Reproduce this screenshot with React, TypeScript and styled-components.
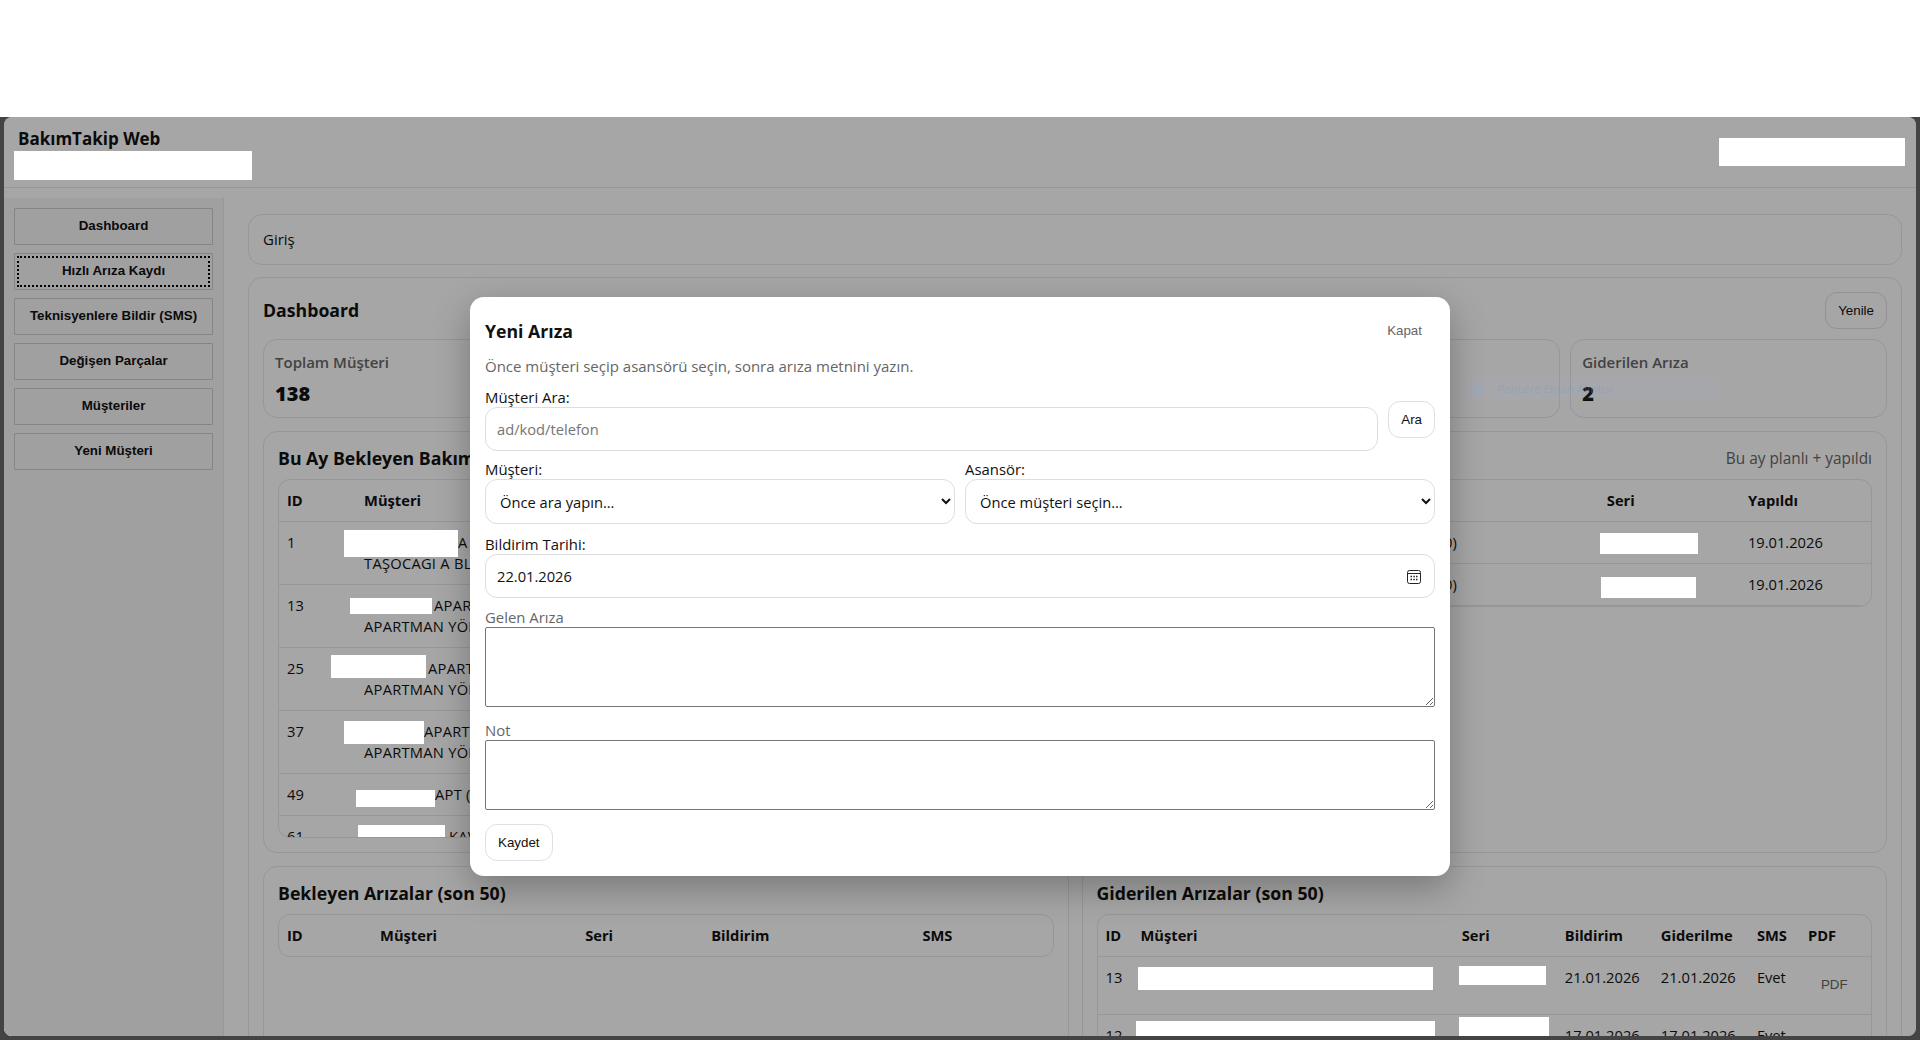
import React from "react";
import styled, { createGlobalStyle } from "styled-components";

const Global = createGlobalStyle`
  html, body { margin: 0; padding: 0; background: #fff; height: 1040px; overflow: hidden; }
  body { font-family: "Open Sans", "Liberation Sans", sans-serif; font-size: 14.7px; line-height: 21px; color: #111; }
  * { box-sizing: border-box; }
`;

const TopBlank = styled.div`height: 117px; background: #fff;`;
const Desktop = styled.div`height: 923px; background: #444; padding: 0 4px 4px 4px;`;
const AppWindow = styled.div`
  position: relative; height: 919px; background: #fff; border-radius: 8px; overflow: hidden;
`;
const Header = styled.header`
  height: 71px; border-bottom: 1px solid #e8e8e8; padding: 11px 14px 10px;
  display: flex; justify-content: space-between; align-items: flex-start; position: relative;
`;
const Brand = styled.div`font-size: 17px; font-weight: 700; line-height: 22px;`;
const Body = styled.div`display: flex; padding-top: 10px; height: 848px;`;
const Sidebar = styled.nav`
  width: 220px; flex: none; background: #f6f6f6; border-right: 1px solid #e8e8e8; padding: 10px;
  display: flex; flex-direction: column; gap: 8px;
`;
const NavButton = styled.button<{ $focus?: boolean }>`
  height: 37px; font: 700 13.33px "Liberation Sans", Arial, sans-serif; color: #111; background: #f6f6f6;
  border: 1px solid #ccc; border-radius: 1px; padding: 0 0 2px;
  ${(p) => (p.$focus ? "outline: 2px dotted #000; outline-offset: -5px;" : "")}
`;
const Main = styled.main`flex: 1; min-width: 0; padding: 16px 14px 0 24px; display: flex; flex-direction: column; gap: 12px;`;
const Card = styled.section`border: 1px solid #e8e8e8; border-radius: 14px; padding: 14px; background: #fff; font-size: 15px;`;
const DashboardCard = styled(Card)`flex: 1; font-size: 14.7px;`;
const TitleRow = styled.div`display: flex; justify-content: space-between; align-items: center; height: 36px; margin-bottom: 11px;`;
const H1 = styled.h2`margin: 0; font-size: 17.7px; font-weight: 700; line-height: 24px;`;
const GrayNote = styled.span`color: #666; font-size: 15.4px;`;
const Btn = styled.button`
  font: 400 13.33px "Liberation Sans", Arial, sans-serif; color: #111; background: #fff;
  border: 1px solid #e0e0e0; border-radius: 12px; padding: 0 12px; height: 37px; flex: none;
`;
const GhostBtn = styled(Btn)`background: transparent; border-color: transparent; color: #666; display: block;`;
const PdfBtn = styled(GhostBtn)`height: 35px; margin-bottom: 2px;`;
const Stats = styled.div`display: grid; grid-template-columns: repeat(5, 1fr); gap: 10px; margin-bottom: 13px;`;
const Stat = styled.div`border: 1px solid #e8e8e8; border-radius: 14px; padding: 12px 11px; height: 79px;`;
const StatLabel = styled.div`color: #666; font-weight: 600; font-size: 15px;`;
const StatValue = styled.div`font-weight: 800; font-size: 20px; line-height: 24px; margin-top: 9px;`;
const Columns = styled.div`display: grid; grid-template-columns: 1fr 1fr; gap: 13px; margin-bottom: 13px;`;
const Panel = styled.div`border: 1px solid #e8e8e8; border-radius: 14px; padding: 14px; min-width: 0;`;
const PanelHead = styled.div`display: flex; justify-content: space-between; align-items: center; height: 24px; margin-bottom: 9px;`;
const TableWrap = styled.div<{ $h?: number }>`
  border: 1px solid #e8e8e8; border-radius: 12px; overflow: hidden;
  ${(p) => (p.$h ? `height: ${p.$h}px;` : "")}
`;
const Table = styled.table`width: 100%; table-layout: fixed; border-collapse: separate; border-spacing: 0;`;
const Col = styled.col<{ $w: number }>`width: ${(p) => p.$w}px;`;
const Th = styled.th`
  text-align: left; font-weight: 700; padding: 10px 9px; height: 42px; border-bottom: 1px solid #e8e8e8; white-space: nowrap;
  &:first-child { padding-left: 8px; }
`;
const HeadOnly = styled(Th)`border-bottom: 0; height: 41px;`;
const Td = styled.td<{ $rightPad?: number }>`
  position: relative; padding: 10px 9px; vertical-align: top; border-bottom: 1px solid #e8e8e8; white-space: nowrap;
  &:first-child { padding-left: 8px; }
  ${(p) => (p.$rightPad ? `text-align: right; padding-right: ${p.$rightPad}px;` : "")}
`;
const NameCell = styled(Td)`letter-spacing: 0.25px;`;
const Redact = styled.i<{ $l: number; $t: number; $w: number; $h: number }>`
  position: absolute; z-index: 20; background: #fff; display: block;
  left: ${(p) => p.$l}px; top: ${(p) => p.$t}px; width: ${(p) => p.$w}px; height: ${(p) => p.$h}px;
`;
const NameGap = styled.span<{ $w: number }>`display: inline-block; width: ${(p) => p.$w}px;`;

const Overlay = styled.div`
  position: absolute; inset: 0; z-index: 10; background: rgba(0, 0, 0, 0.35);
  display: flex; justify-content: center; align-items: flex-start; padding-top: 180px;
`;
const Modal = styled.div`
  width: 980px; height: 579px; background: #fff; border-radius: 14px; padding: 15px;
  box-shadow: 0 12px 36px rgba(0, 0, 0, 0.28); display: flex; flex-direction: column;
`;
const ModalHead = styled.div`display: flex; justify-content: space-between; align-items: center; height: 37px;`;
const ModalTitle = styled.h3`margin: 0; font-size: 17.7px; font-weight: 700; line-height: 24px;`;
const Hint = styled.div`color: #666; margin-top: 7px; height: 21px; font-size: 15px;`;
const SearchRow = styled.div`display: flex; align-items: center; gap: 10px; margin-top: 10px;`;
const Field = styled.div`flex: 1; min-width: 0; position: relative;`;
const Label = styled.label<{ $muted?: boolean }>`display: block; height: 20px; line-height: 20px; font-size: 14.9px; color: ${(p) => (p.$muted ? "#666" : "#111")};`;
const TextInput = styled.input<{ $h: number }>`
  display: block; width: 100%; height: ${(p) => p.$h}px; border: 1px solid #ddd; border-radius: 12px; padding: 0 11px;
  font: 14.7px "Open Sans", sans-serif; color: #111; background: #fff; outline: 0;
  &::placeholder { color: #757575; }
`;
const Pair = styled.div`display: grid; grid-template-columns: 1fr 1fr; gap: 10px; margin-top: 8px;`;
const Select = styled.select`
  display: block; width: 100%; height: 45px; border: 1px solid #ddd; border-radius: 12px; padding: 0 10px;
  font: 14.7px "Open Sans", sans-serif; color: #111; background: #fff;
`;
const DateField = styled(Field)`flex: none; margin-top: 10px;`;
const CalIcon = styled.svg`position: absolute; right: 14px; top: 36px; width: 14px; height: 14px;`;
const AreaField = styled.div<{ $gap: number }>`margin-top: ${(p) => p.$gap}px;`;
const Area = styled.textarea<{ $h: number }>`
  display: block; width: 100%; height: ${(p) => p.$h}px; border: 1px solid #767676; border-radius: 2px; padding: 8px; background: #fff; font: 14.7px "Open Sans", sans-serif;
`;
const SaveRow = styled.div`margin-top: 14px;`;
const Watermark = styled.div`
  position: absolute; z-index: 20; left: 1461px; top: 260px; width: 255px; height: 23px;
  background: rgba(150, 190, 235, 0.06); display: flex; align-items: center; gap: 15px; padding-left: 9px;
  font: 11.5px "Open Sans", sans-serif; color: rgba(125, 155, 195, 0.4);
`;
const WmDot = styled.span`width: 8px; height: 8px; border-radius: 2px; background: rgba(140, 170, 210, 0.4);`;

const statData = [
  ["Toplam Müşteri", "138"], ["Toplam Asansör", "214"], ["Bu Ay Bakım", "72"], ["Bekleyen Arıza", "0"], ["Giderilen Arıza", "2"],
];
const leftRows = [
  { id: "1", g: 94, t: "A BLOK APARTMANI", b: "TAŞOCAĞI A BLOK YÖNETİMİ", r: [-11, 8, 114, 27] },
  { id: "13", g: 70, t: "APARTMANI", b: "APARTMAN YÖNETİMİ", r: [-5, 13, 82, 16] },
  { id: "25", g: 64, t: "APARTMANI", b: "APARTMAN YÖNETİMİ", r: [-24, 7, 95, 23] },
  { id: "37", g: 60, t: "APARTMANI", b: "APARTMAN YÖNETİMİ", r: [-11, 10, 80, 23] },
  { id: "49", g: 71, t: "APT (A)", r: [1, 16, 79, 17] },
  { id: "61", g: 85, t: "KAVAK APT", r: [3, 9, 87, 20] },
];

export default function App() {
  return (
    <>
      <Global />
      <TopBlank />
      <Desktop>
        <AppWindow>
          <Header>
            <Brand>BakımTakip Web</Brand>
            <Redact $l={10} $t={34} $w={238} $h={29} />
            <Redact $l={1715} $t={21} $w={186} $h={28} />
          </Header>
          <Body>
            <Sidebar>
              <NavButton>Dashboard</NavButton>
              <NavButton $focus>Hızlı Arıza Kaydı</NavButton>
              <NavButton>Teknisyenlere Bildir (SMS)</NavButton>
              <NavButton>Değişen Parçalar</NavButton>
              <NavButton>Müşteriler</NavButton>
              <NavButton>Yeni Müşteri</NavButton>
            </Sidebar>
            <Main>
              <Card>Giriş</Card>
              <DashboardCard>
                <TitleRow>
                  <H1>Dashboard</H1>
                  <Btn>Yenile</Btn>
                </TitleRow>
                <Stats>
                  {statData.map(([l, v]) => (
                    <Stat key={l}>
                      <StatLabel>{l}</StatLabel>
                      <StatValue>{v}</StatValue>
                    </Stat>
                  ))}
                </Stats>
                <Columns>
                  <Panel>
                    <PanelHead><H1>Bu Ay Bekleyen Bakımlar</H1></PanelHead>
                    <TableWrap $h={359}>
                      <Table>
                        <colgroup><Col $w={76} /><Col $w={420} /><Col $w={140} /><Col $w={137} /></colgroup>
                        <thead><tr><Th>ID</Th><Th>Müşteri</Th><Th>Seri</Th><Th>Plan</Th></tr></thead>
                        <tbody>
                          {leftRows.map((r) => (
                            <tr key={r.id}>
                              <Td>{r.id}</Td>
                              <NameCell>
                                <Redact $l={r.r[0]} $t={r.r[1]} $w={r.r[2]} $h={r.r[3]} />
                                <NameGap $w={r.g} />{r.t}
                                {r.b && <><br />{r.b}</>}
                              </NameCell>
                              <Td>—</Td>
                              <Td>Ocak</Td>
                            </tr>
                          ))}
                        </tbody>
                      </Table>
                    </TableWrap>
                  </Panel>
                  <Panel>
                    <PanelHead><H1>Bu Ay Yapılan Bakımlar</H1><GrayNote>Bu ay planlı + yapıldı</GrayNote></PanelHead>
                    <TableWrap>
                      <Table>
                        <colgroup><Col $w={40} /><Col $w={460} /><Col $w={141} /><Col $w={132} /></colgroup>
                        <thead><tr><Th>ID</Th><Th>Müşteri</Th><Th>Seri</Th><Th>Yapıldı</Th></tr></thead>
                        <tbody>
                          <tr>
                            <Td>2</Td><Td $rightPad={141}>MERKEZ APARTMANI (0)</Td>
                            <Td><Redact $l={2} $t={11} $w={98} $h={21} /></Td><Td>19.01.2026</Td>
                          </tr>
                          <tr>
                            <Td>3</Td><Td $rightPad={141}>ÇINAR APARTMANI (0)</Td>
                            <Td><Redact $l={3} $t={13} $w={95} $h={21} /></Td><Td>19.01.2026</Td>
                          </tr>
                        </tbody>
                      </Table>
                    </TableWrap>
                  </Panel>
                </Columns>
                <Columns>
                  <Panel>
                    <PanelHead><H1>Bekleyen Arızalar (son 50)</H1></PanelHead>
                    <TableWrap>
                      <Table>
                        <colgroup><Col $w={92} /><Col $w={205} /><Col $w={126} /><Col $w={211} /><Col $w={139} /></colgroup>
                        <thead><tr><HeadOnly>ID</HeadOnly><HeadOnly>Müşteri</HeadOnly><HeadOnly>Seri</HeadOnly><HeadOnly>Bildirim</HeadOnly><HeadOnly>SMS</HeadOnly></tr></thead>
                      </Table>
                    </TableWrap>
                  </Panel>
                  <Panel>
                    <PanelHead><H1>Giderilen Arızalar (son 50)</H1></PanelHead>
                    <TableWrap>
                      <Table>
                        <colgroup><Col $w={34} /><Col $w={321} /><Col $w={103} /><Col $w={96} /><Col $w={96} /><Col $w={51} /><Col $w={72} /></colgroup>
                        <thead><tr><Th>ID</Th><Th>Müşteri</Th><Th>Seri</Th><Th>Bildirim</Th><Th>Giderilme</Th><Th>SMS</Th><Th>PDF</Th></tr></thead>
                        <tbody>
                          <tr>
                            <Td>13</Td>
                            <Td><Redact $l={6} $t={10} $w={295} $h={23} /></Td>
                            <Td><Redact $l={6} $t={9} $w={87} $h={19} /></Td>
                            <Td>21.01.2026</Td><Td>21.01.2026</Td><Td>Evet</Td>
                            <Td><PdfBtn>PDF</PdfBtn></Td>
                          </tr>
                          <tr>
                            <Td>12</Td>
                            <Td><Redact $l={4} $t={6} $w={299} $h={40} /></Td>
                            <Td><Redact $l={6} $t={2} $w={90} $h={40} /></Td>
                            <Td>17.01.2026</Td><Td>17.01.2026</Td><Td>Evet</Td>
                            <Td><PdfBtn>PDF</PdfBtn></Td>
                          </tr>
                        </tbody>
                      </Table>
                    </TableWrap>
                  </Panel>
                </Columns>
              </DashboardCard>
            </Main>
          </Body>
          <Overlay>
            <Modal>
              <ModalHead>
                <ModalTitle>Yeni Arıza</ModalTitle>
                <GhostBtn>Kapat</GhostBtn>
              </ModalHead>
              <Hint>Önce müşteri seçip asansörü seçin, sonra arıza metnini yazın.</Hint>
              <SearchRow>
                <Field>
                  <Label>Müşteri Ara:</Label>
                  <TextInput $h={44} placeholder="ad/kod/telefon" />
                </Field>
                <Btn>Ara</Btn>
              </SearchRow>
              <Pair>
                <div>
                  <Label>Müşteri:</Label>
                  <Select><option>Önce ara yapın...</option></Select>
                </div>
                <div>
                  <Label>Asansör:</Label>
                  <Select><option>Önce müşteri seçin...</option></Select>
                </div>
              </Pair>
              <DateField>
                <Label>Bildirim Tarihi:</Label>
                <TextInput $h={44} defaultValue="22.01.2026" />
                <CalIcon viewBox="0 0 14 14" fill="none" stroke="#222" strokeWidth="1">
                  <rect x="0.5" y="0.5" width="13" height="13" rx="2" />
                  <path d="M1 3.5h12" />
                  <path d="M3.5 6.5h1.5M6.3 6.5h1.5M9 6.5h1.5M3.5 9.5h1.5M6.3 9.5h1.5M9 9.5h1.5" strokeWidth="1.3" />
                </CalIcon>
              </DateField>
              <AreaField $gap={9}>
                <Label $muted>Gelen Arıza</Label>
                <Area $h={80} />
              </AreaField>
              <AreaField $gap={13}>
                <Label $muted>Not</Label>
                <Area $h={70} />
              </AreaField>
              <SaveRow><Btn>Kaydet</Btn></SaveRow>
            </Modal>
          </Overlay>
          <Watermark><WmDot />Pencere Ekran Alıntısı</Watermark>
        </AppWindow>
      </Desktop>
    </>
  );
}
